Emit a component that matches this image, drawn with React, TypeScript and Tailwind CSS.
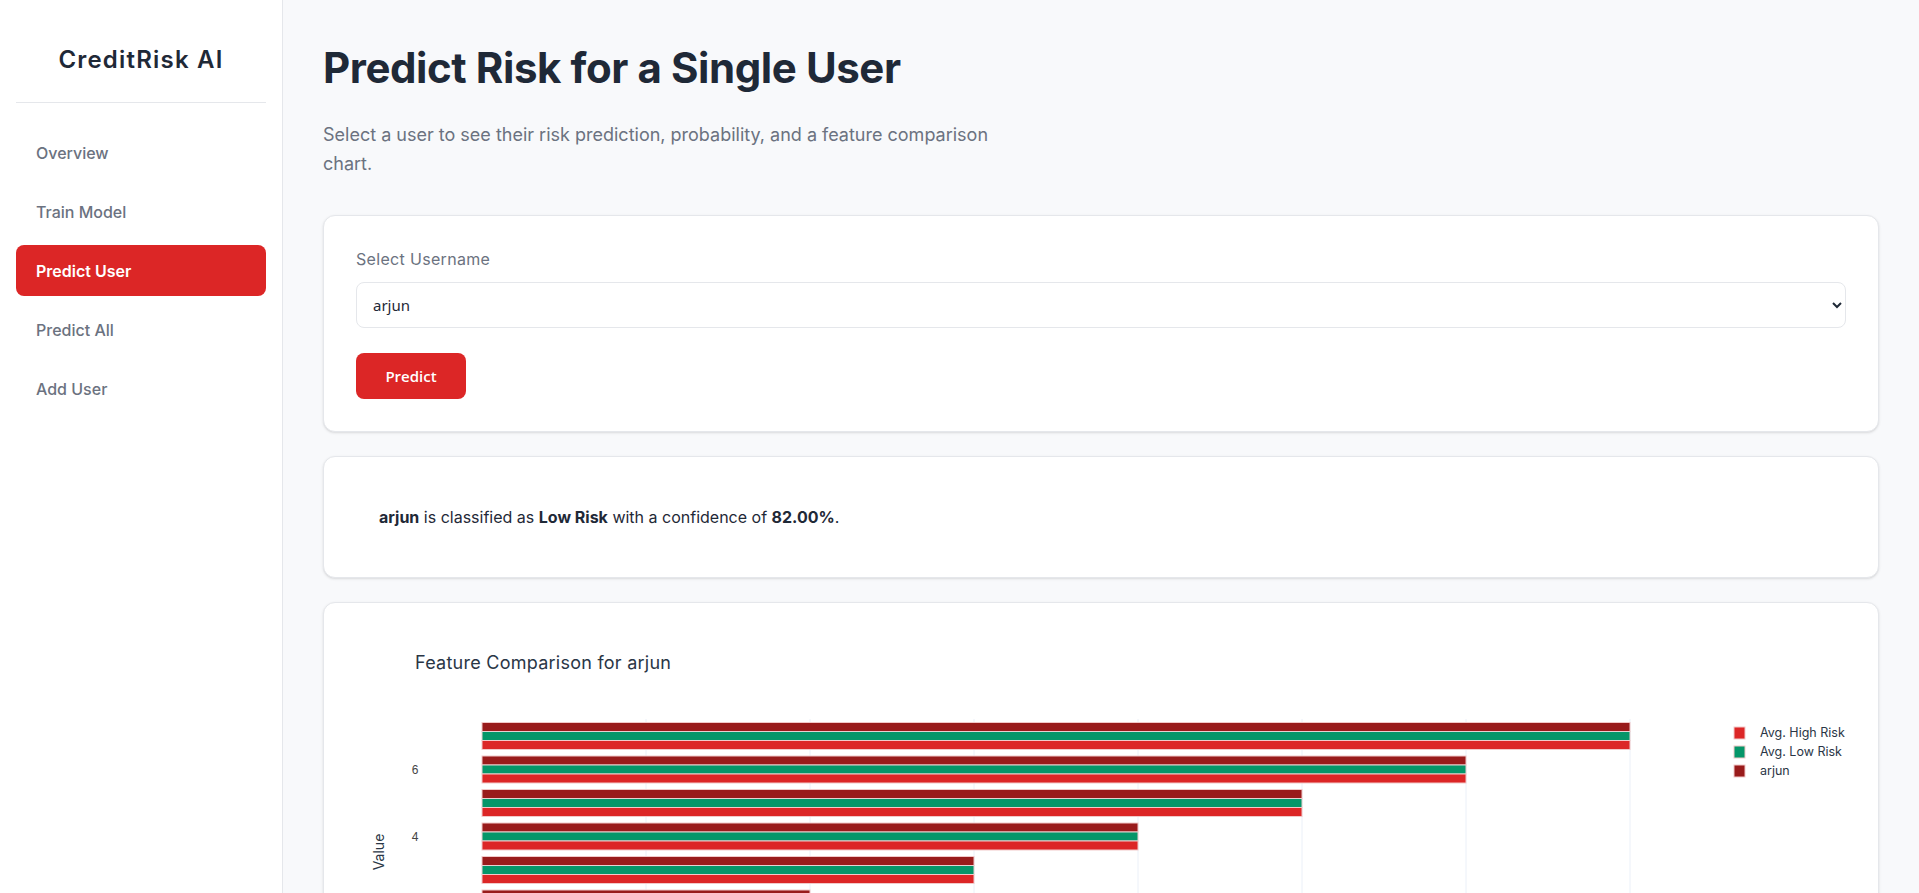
import { useState } from "react";

const NAV = ["Overview", "Train Model", "Predict User", "Predict All", "Add User"];

const COLORS = {
  high: "#dc2626",
  low: "#059669",
  user: "#991b1b",
};

// y position -> value; bars run horizontally with length = value
const GROUPS = [7, 6, 5, 4, 3, 2, 1];
const UNIT_X = 164;
const UNIT_Y = 33.5;
const PLOT_LEFT = 126;

function FeatureChart({ username }: { username: string }) {
  const cy = (v: number) => 101 + (7 - v) * UNIT_Y;
  return (
    <svg width="1489" height="470" viewBox="0 0 1489 470" className="block">
      <text
        x="59"
        y="34"
        fontSize="18"
        letterSpacing="0.25"
        fill="#2a3646"
        fontFamily="Inter, 'Noto Sans', sans-serif"
      >
        Feature Comparison for {username}
      </text>

      {[1, 2, 3, 4, 5, 6, 7].map((k) => (
        <line
          key={k}
          x1={PLOT_LEFT + k * UNIT_X}
          x2={PLOT_LEFT + k * UNIT_X}
          y1="84"
          y2="440"
          stroke="#ebf0f8"
          strokeWidth="1"
        />
      ))}

      {GROUPS.map((v) => {
        const top = cy(v) - 13.5;
        const w = v * UNIT_X;
        return (
          <g key={v}>
            <rect x={PLOT_LEFT} y={top} width={w} height="9" fill={COLORS.user} stroke="#f2c9c9" strokeWidth="1" />
            <rect x={PLOT_LEFT} y={top + 9} width={w} height="9" fill={COLORS.low} stroke="#e6d2d2" strokeWidth="1" />
            <rect x={PLOT_LEFT} y={top + 18} width={w} height="9" fill={COLORS.high} stroke="#f2c9c9" strokeWidth="1" />
          </g>
        );
      })}

      {[6, 4, 2].map((v) => (
        <text
          key={v}
          x="59"
          y={cy(v) + 4}
          fontSize="12"
          fill="#444"
          textAnchor="middle"
          fontFamily="'Liberation Sans', Arial, sans-serif"
        >
          {v}
        </text>
      ))}

      <text
        x="24"
        y="217"
        fontSize="14"
        fill="#2a3646"
        textAnchor="middle"
        transform="rotate(-90 24 217)"
        dominantBaseline="middle"
        fontFamily="Inter, 'Noto Sans', sans-serif"
      >
        Value
      </text>

      {[
        { label: "Avg. High Risk", color: COLORS.high, y: 98 },
        { label: "Avg. Low Risk", color: COLORS.low, y: 117 },
        { label: username, color: COLORS.user, y: 136 },
      ].map((l) => (
        <g key={l.label}>
          <rect x="1378" y={l.y - 6} width="11" height="12" fill={l.color} stroke="#f2c9c9" strokeWidth="1" />
          <text
            x="1404"
            y={l.y + 4}
            fontSize="12.5"
            fill="#2a3646"
            fontFamily="Inter, 'Noto Sans', sans-serif"
          >
            {l.label}
          </text>
        </g>
      ))}
    </svg>
  );
}

export default function App() {
  const [user, setUser] = useState("arjun");

  return (
    <div className="min-h-screen flex bg-[#f8f9fb] font-['Inter','Noto_Sans',sans-serif]">
      <aside className="w-[283px] shrink-0 bg-white border-r border-[#e5e7eb] px-4 pt-4 min-h-screen">
        <div className="pt-7 pb-[26px] border-b border-[#e5e7eb] text-center">
          <h1 className="text-[24px] leading-8 font-semibold tracking-[0.05em] text-[#1f2937]">CreditRisk AI</h1>
        </div>
        <nav className="mt-6 flex flex-col gap-2">
          {NAV.map((item) => {
            const active = item === "Predict User";
            return (
              <a
                key={item}
                href="#"
                className={`h-[51px] flex items-center pl-5 rounded-lg text-base ${
                  active ? "bg-[#dc2626] text-white font-semibold" : "text-[#6b7280] font-medium"
                }`}
              >
                {item}
              </a>
            );
          })}
        </nav>
      </aside>

      <main className="flex-1 px-10 pt-[44px] pb-10">
        <h2 className="text-[42px] leading-[48px] font-bold tracking-[-0.01em] text-[#1f2937]">
          Predict Risk for a Single User
        </h2>
        <p className="mt-[28px] max-w-[690px] text-[18px] leading-[29px] text-[#6b7280]">
          Select a user to see their risk prediction, probability, and a feature comparison chart.
        </p>

        <section className="mt-[37px] bg-white border border-[#e5e7eb] rounded-xl shadow-sm p-8 pt-[31px]">
          <label className="block text-base leading-6 tracking-[0.02em] text-[#6b7280]">Select Username</label>
          <select
            value={user}
            onChange={(e) => setUser(e.target.value)}
            className="mt-[11px] w-full h-[46px] px-3 border border-[#e5e7eb] rounded-lg bg-white text-[15px] text-[#1f2937] font-['Noto_Sans',sans-serif]"
          >
            <option value="arjun">arjun</option>
            <option value="priya">priya</option>
            <option value="rahul">rahul</option>
          </select>
          <button className="mt-[25px] w-[110px] h-[46px] rounded-lg bg-[#dc2626] text-white text-[15px] font-semibold font-['Open_Sans',sans-serif]">
            Predict
          </button>
        </section>

        <section className="mt-6 bg-white border border-[#e5e7eb] rounded-xl shadow-sm px-[55px] py-12">
          <p className="text-base leading-6 text-[#1f2937]">
            <strong className="font-bold">{user}</strong> is classified as{" "}
            <strong className="font-bold">Low Risk</strong> with a confidence of{" "}
            <strong className="font-bold">82.00%</strong>.
          </p>
        </section>

        <section className="mt-6 bg-white border border-[#e5e7eb] rounded-xl shadow-sm p-8">
          <FeatureChart username={user} />
        </section>
      </main>
    </div>
  );
}
